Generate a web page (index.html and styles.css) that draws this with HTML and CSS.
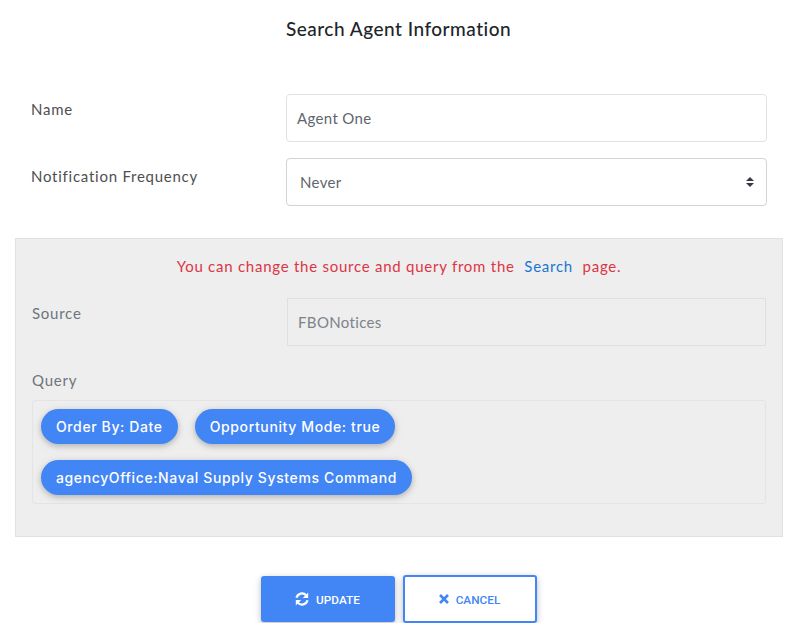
FILE: index.html
```html
<!DOCTYPE html>
<html lang="en">
<head>
  <meta charset="UTF-8">
  <meta name="viewport" content="width=device-width, initial-scale=1.0">
  <title>Search Agent Information</title>
  <link rel="stylesheet" href="styles.css">
</head>
<body>
  <h1 class="page-title">Search Agent Information</h1>

  <!-- Agent fields -->
  <form class="agent-form">
    <div class="form-row">
      <label class="form-label" for="agent-name">Name</label>
      <input class="form-input" id="agent-name" type="text" value="Agent One">
    </div>
    <div class="form-row">
      <label class="form-label form-label-low" for="agent-frequency">Notification Frequency</label>
      <div class="select-box" id="agent-frequency">
        <span>Never</span>
        <svg class="select-arrows" width="8" height="10" viewBox="0 0 8 10"><path d="M4 0 8 4H0zM0 6h8L4 10z" fill="#343a40"/></svg>
      </div>
    </div>
  </form>

  <!-- Read only source and query -->
  <section class="source-panel">
    <p class="panel-note">You can change the source and query from the <a href="#search">Search</a> page.</p>
    <div class="form-row source-row">
      <span class="form-label">Source</span>
      <div class="readonly-box">FBONotices</div>
    </div>
    <div class="query-label">Query</div>
    <div class="chip-box">
      <span class="chip">Order By: Date</span>
      <span class="chip">Opportunity Mode: true</span>
      <span class="chip">agencyOffice:Naval Supply Systems Command</span>
    </div>
  </section>

  <div class="actions">
    <button class="btn btn-primary" type="button">
      <svg width="14" height="14" viewBox="0 0 14 14" fill="none" stroke="#fff" stroke-width="2.2"><path d="M1.5 5.8A5.6 5.6 0 0 1 11.2 3.4"/><path d="M12.5 8.2A5.6 5.6 0 0 1 2.8 10.6"/><path d="M13.2 0.6V6H7.8z" fill="#fff" stroke="none"/><path d="M0.8 13.4V8H6.2z" fill="#fff" stroke="none"/></svg>
      <span>UPDATE</span>
    </button>
    <button class="btn btn-outline" type="button">
      <svg width="10" height="10" viewBox="0 0 10 10" fill="none" stroke="#4285f4" stroke-width="2.6"><path d="M1 1 9 9M9 1 1 9"/></svg>
      <span>CANCEL</span>
    </button>
  </div>
</body>
</html>
```

FILE: styles.css
```css
/* General Styles */
body {
  font-family: 'Lato', 'Noto Sans', sans-serif;
  font-size: 15px;
  letter-spacing: 0.75px;
  background: #fff;
  margin: 0;
  padding: 0;
  color: #4f4f4f;
}

.page-title {
  font-size: 19px;
  font-weight: 500;
  line-height: 24px;
  letter-spacing: 0.5px;
  color: #212529;
  text-align: center;
  margin: 0;
  padding-top: 17px;
}

/* Form rows */
.agent-form {
  display: flex;
  flex-direction: column;
  gap: 16px;
  margin: 53px 30px 32px 31px;
}

.form-row {
  display: grid;
  grid-template-columns: 255px 1fr;
}

.form-label {
  line-height: 20px;
  padding-top: 5px;
}

.form-label-low {
  padding-top: 8px;
}

.form-input,
.select-box {
  box-sizing: border-box;
  height: 48px;
  background: #fff;
  border: 1px solid #dfe2e8;
  border-radius: 4px;
  font: inherit;
  letter-spacing: 0.35px;
  color: #5f666d;
  padding: 0 10px;
  width: 100%;
}

.select-box {
  display: flex;
  align-items: center;
  justify-content: space-between;
  border-color: #ced4da;
  padding: 0 12px 0 13px;
}

/* Source panel */
.source-panel {
  box-sizing: border-box;
  height: 299px;
  margin: 0 14px 0 15px;
  padding: 0 16px;
  background: #eee;
  border: 1px solid #dee2e6;
}

.panel-note {
  margin: 0;
  padding-top: 17px;
  padding-bottom: 1px;
  line-height: 20px;
  text-align: center;
  color: #dc3545;
}

.panel-note a {
  color: #1976d2;
  text-decoration: none;
  margin: 0 5px;
}

.source-row {
  margin-top: 21px;
  grid-template-columns: 255px 1fr;
  color: #6c757d;
}

.readonly-box {
  box-sizing: border-box;
  height: 48px;
  display: flex;
  align-items: center;
  border: 1px solid #dddfe2;
  padding: 0 10px;
  letter-spacing: 0.35px;
  color: #7d8389;
}

.query-label {
  margin-top: 24px;
  line-height: 20px;
  color: #6c757d;
}

.chip-box {
  box-sizing: border-box;
  height: 104px;
  margin-top: 10px;
  padding: 8px;
  border: 1px solid #e2e4e8;
  border-radius: 3px;
  display: flex;
  flex-wrap: wrap;
  align-content: flex-start;
  gap: 16px 17px;
}

.chip {
  height: 35px;
  line-height: 35px;
  padding: 0 15px;
  border-radius: 18px;
  background: #4285f4;
  color: #fff;
  font-family: 'Inter', sans-serif;
  font-size: 14px;
  font-weight: 500;
  letter-spacing: 0.62px;
  white-space: nowrap;
  box-shadow: 0 2px 5px rgba(0, 0, 0, 0.16), 0 2px 10px rgba(0, 0, 0, 0.12);
}

/* Buttons */
.actions {
  display: flex;
  justify-content: center;
  align-items: center;
  gap: 8px;
  margin-top: 38px;
}

.btn {
  box-sizing: border-box;
  width: 134px;
  height: 46px;
  display: flex;
  align-items: center;
  justify-content: center;
  gap: 7px;
  border: none;
  border-radius: 3px;
  font-family: Roboto, sans-serif;
  font-size: 11.8px;
  font-weight: 500;
  letter-spacing: 0;
  box-shadow: 0 2px 5px rgba(0, 0, 0, 0.16), 0 2px 10px rgba(0, 0, 0, 0.12);
}

.btn span {
  padding-top: 1px;
}

.btn-primary {
  background: #4285f4;
  color: #fff;
}

.btn-outline {
  height: 48px;
  background: #fff;
  color: #4285f4;
  border: 2px solid #4285f4;
}
```
